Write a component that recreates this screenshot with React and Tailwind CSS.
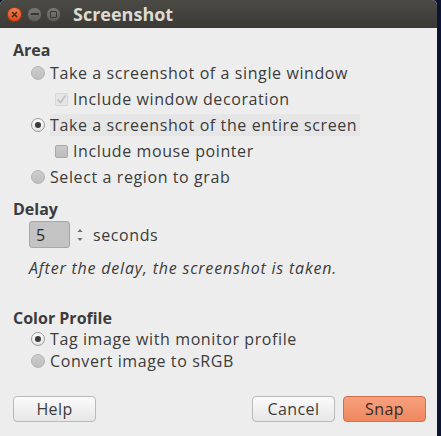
import React from 'react';

const font = { fontFamily: '"Open Sans", "DejaVu Sans", sans-serif' };

function Radio({ checked }) {
  if (checked) {
    return (
      <span className="w-[14px] h-[14px] rounded-full border border-[#9a9a9a] bg-gradient-to-b from-[#fafafa] to-[#e4e4e4] flex items-center justify-center shrink-0">
        <span className="w-[6px] h-[6px] rounded-full bg-[#3a3a3a]"></span>
      </span>
    );
  }
  return <span className="w-[14px] h-[14px] rounded-full border border-[#b4b4b4] bg-gradient-to-b from-[#cdcdcd] to-[#bdbdbd] shrink-0"></span>;
}

function Check({ disabled, checked }) {
  if (disabled) {
    return (
      <span className="w-[13px] h-[13px] rounded-[2px] border border-[#d6d6d6] bg-[#e6e6e6] flex items-center justify-center shrink-0">
        {checked && (
          <svg width="11" height="11" viewBox="0 0 11 11">
            <path d="M1.5 5.5 L4.5 8.5 L9.5 1.5" fill="none" stroke="#c4c4c4" strokeWidth="2" />
          </svg>
        )}
      </span>
    );
  }
  return <span className="w-[13px] h-[13px] rounded-[2px] border border-[#a8a8a8] bg-gradient-to-b from-[#cacaca] to-[#bcbcbc] shrink-0"></span>;
}

function Row({ children, control, indent = 'pl-[18px]', h = 'h-[26px]', highlight }) {
  return (
    <div className={`flex items-center ${h} ${indent}`}>
      {control}
      <span className={`ml-[5px] ${highlight ? 'bg-[#e6e6e6] pr-[3px] py-[3px]' : ''}`}>{children}</span>
    </div>
  );
}

function Button({ children, primary }) {
  return (
    <button
      className={
        primary
          ? 'w-[83px] h-[26px] rounded-[4px] border border-[#cf6f4c] bg-gradient-to-b from-[#f7a07e] to-[#ef875f] text-[#3a2a22] text-[16px] tracking-[0.4px]'
          : 'w-[83px] h-[26px] rounded-[4px] border border-[#b9b9b9] bg-gradient-to-b from-[#fbfbfb] to-[#e6e6e6] text-[#3c3c3c] text-[16px] tracking-[0.4px]'
      }
    >
      {children}
    </button>
  );
}

export default function App() {
  return (
    <div className="w-[441px] h-[436px] bg-[#0c1634] flex" style={font}>
      <div className="w-[437px] h-[436px] bg-[#ededed] rounded-t-[5px] overflow-hidden flex flex-col">
        <div className="h-[28px] bg-gradient-to-b from-[#4b4a45] to-[#3b3a36] flex items-center pl-[7px]">
          <span className="w-[15px] h-[15px] rounded-full border border-[#a53510] bg-gradient-to-b from-[#f3804f] to-[#dd4714] flex items-center justify-center">
            <svg width="7" height="7" viewBox="0 0 7 7">
              <path d="M1 1 L6 6 M6 1 L1 6" stroke="#3b2a22" strokeWidth="1.5" />
            </svg>
          </span>
          <span className="ml-[5px] w-[15px] h-[15px] rounded-full border border-[#4a4944] bg-gradient-to-b from-[#7a7974] to-[#605f5a] flex items-center justify-center">
            <span className="w-[8px] h-[2px] bg-[#3a3935]"></span>
          </span>
          <span className="ml-[4px] w-[15px] h-[15px] rounded-full border border-[#4a4944] bg-gradient-to-b from-[#7a7974] to-[#605f5a] flex items-center justify-center">
            <span className="w-[7px] h-[7px] border-[1.5px] border-[#3a3935] rounded-[1px]"></span>
          </span>
          <span className="ml-[12px] text-[18px] font-bold text-[#dfdbd2] leading-none">Screenshot</span>
        </div>

        <div className="flex flex-col pt-[12px] pl-[13px] text-[16px] tracking-[0.6px] text-[#3c3c3c] leading-none">
          <div className="h-[20px] flex items-center font-bold tracking-[0px]">Area</div>
          <Row control={<Radio />}>Take a screenshot of a single window</Row>
          <Row control={<Check disabled checked />} indent="pl-[42px]">
            <span className="text-[#3c3c3c]">Include window decoration</span>
          </Row>
          <Row control={<Radio checked />} highlight>Take a screenshot of the entire screen</Row>
          <Row control={<Check />} indent="pl-[42px]">Include mouse pointer</Row>
          <Row control={<Radio />}>Select a region to grab</Row>

          <div className="h-[20px] mt-[9px] flex items-center font-bold tracking-[0px]">Delay</div>
          <div className="h-[27px] mt-[2px] flex items-center pl-[16px]">
            <div className="w-[41px] h-[27px] rounded-[3px] border border-[#a8a8a8] bg-[#c3c3c3] flex items-center pl-[6px] text-[#2c2c2c]">5</div>
            <svg className="ml-[7px]" width="6" height="14" viewBox="0 0 6 14">
              <path d="M0.5 4 L3 1 L5.5 4 Z" fill="#707070" />
              <path d="M0.5 10 L3 13 L5.5 10 Z" fill="#707070" />
            </svg>
            <span className="ml-[10px]">seconds</span>
          </div>
          <div className="h-[20px] mt-[10px] flex items-center pl-[16px] italic tracking-[0.8px]">After the delay, the screenshot is taken.</div>

          <div className="h-[20px] mt-[30px] flex items-center font-bold tracking-[0px]">Color Profile</div>
          <Row control={<Radio checked />} h="h-[22px]">Tag image with monitor profile</Row>
          <Row control={<Radio />} h="h-[22px]">Convert image to sRGB</Row>

          <div className="mt-[24px] flex items-center pr-[11px]">
            <Button>Help</Button>
            <div className="flex-1"></div>
            <Button>Cancel</Button>
            <div className="w-[8px]"></div>
            <Button primary>Snap</Button>
          </div>
        </div>
      </div>
    </div>
  );
}
